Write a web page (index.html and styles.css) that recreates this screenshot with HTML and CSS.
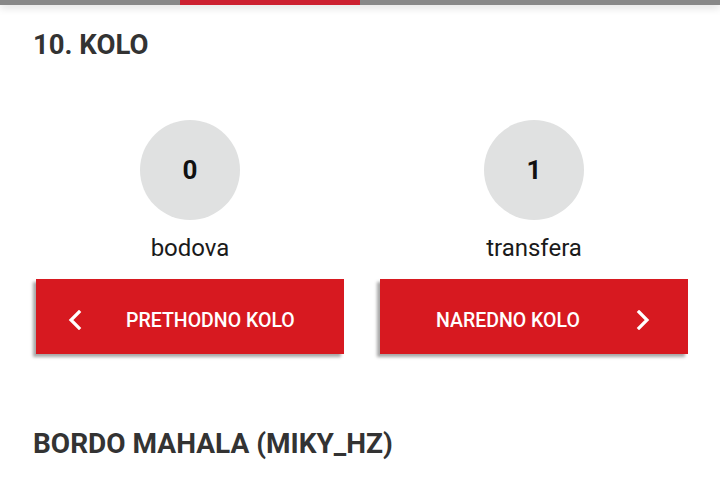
FILE: index.html
```html
<!DOCTYPE html>
<html>
<head>
<meta charset="utf-8">
<link rel="stylesheet" href="styles.css">
</head>
<body>
<div class="tabs"><div class="tab"></div><div class="tab active"></div><div class="tab"></div><div class="tab"></div></div>
<main class="content">
  <h1 class="title">10. KOLO</h1>
  <div class="grid">
    <div class="stat">
      <div class="circle">0</div>
      <div class="label">bodova</div>
    </div>
    <div class="stat">
      <div class="circle">1</div>
      <div class="label">transfera</div>
    </div>
    <button class="btn btn-prev">
      <svg class="chev" width="14" height="20" viewBox="0 0 14 20"><path d="M11 2 L3 10 L11 18" fill="none" stroke="#fff" stroke-width="3.2" stroke-linecap="square"/></svg>
      <span>PRETHODNO KOLO</span>
    </button>
    <button class="btn btn-next">
      <span>NAREDNO KOLO</span>
      <svg class="chev" width="14" height="20" viewBox="0 0 14 20"><path d="M3 2 L11 10 L3 18" fill="none" stroke="#fff" stroke-width="3.2" stroke-linecap="square"/></svg>
    </button>
  </div>
  <h2 class="title team">BORDO MAHALA (MIKY_HZ)</h2>
</main>
</body>
</html>
```
FILE: styles.css
```css
html, body {
  margin: 0;
  padding: 0;
  background: #fff;
  font-family: Roboto, "Noto Sans", sans-serif;
  width: 720px;
  height: 480px;
  overflow: hidden;
}
.tabs {
  display: flex;
  height: 5px;
  background: #888;
  box-shadow: 0 2px 8px rgba(0,0,0,0.18);
  position: relative;
}
.tab { flex: 1; }
.tab.active { background: #cc2030; }
.content {
  padding: 0 32px 0 33px;
}
.title {
  margin: 25px 0 0 0;
  font-size: 27.5px;
  line-height: 30px;
  font-weight: 700;
  color: #333;
}
.grid {
  display: grid;
  grid-template-columns: 308px 308px;
  column-gap: 36px;
  margin: 60px 0 0 3px;
}
.stat {
  display: flex;
  flex-direction: column;
  align-items: center;
}
.circle {
  width: 100px;
  height: 100px;
  border-radius: 50%;
  background: #e0e1e1;
  display: flex;
  align-items: center;
  justify-content: center;
  font-size: 26px;
  font-weight: 700;
  color: #111;
}
.label {
  margin-top: 15px;
  font-size: 24px;
  line-height: 26px;
  color: #1a1a1a;
}
.btn {
  margin-top: 18px;
  height: 75px;
  border: none;
  background: #d71920;
  color: #fff;
  font-family: Roboto, sans-serif;
  font-size: 19.5px;
  font-weight: 500;
  display: flex;
  align-items: center;
  box-shadow: -3px 3px 3px rgba(0,0,0,0.35);
  padding: 7px 0 0 0;
}
.btn-prev { padding-left: 32px; gap: 44px; }
.btn-next { padding-left: 56px; gap: 56px; }
.chev { display: block; }
.team {
  margin-top: 75px;
  font-size: 28px;
}
```
